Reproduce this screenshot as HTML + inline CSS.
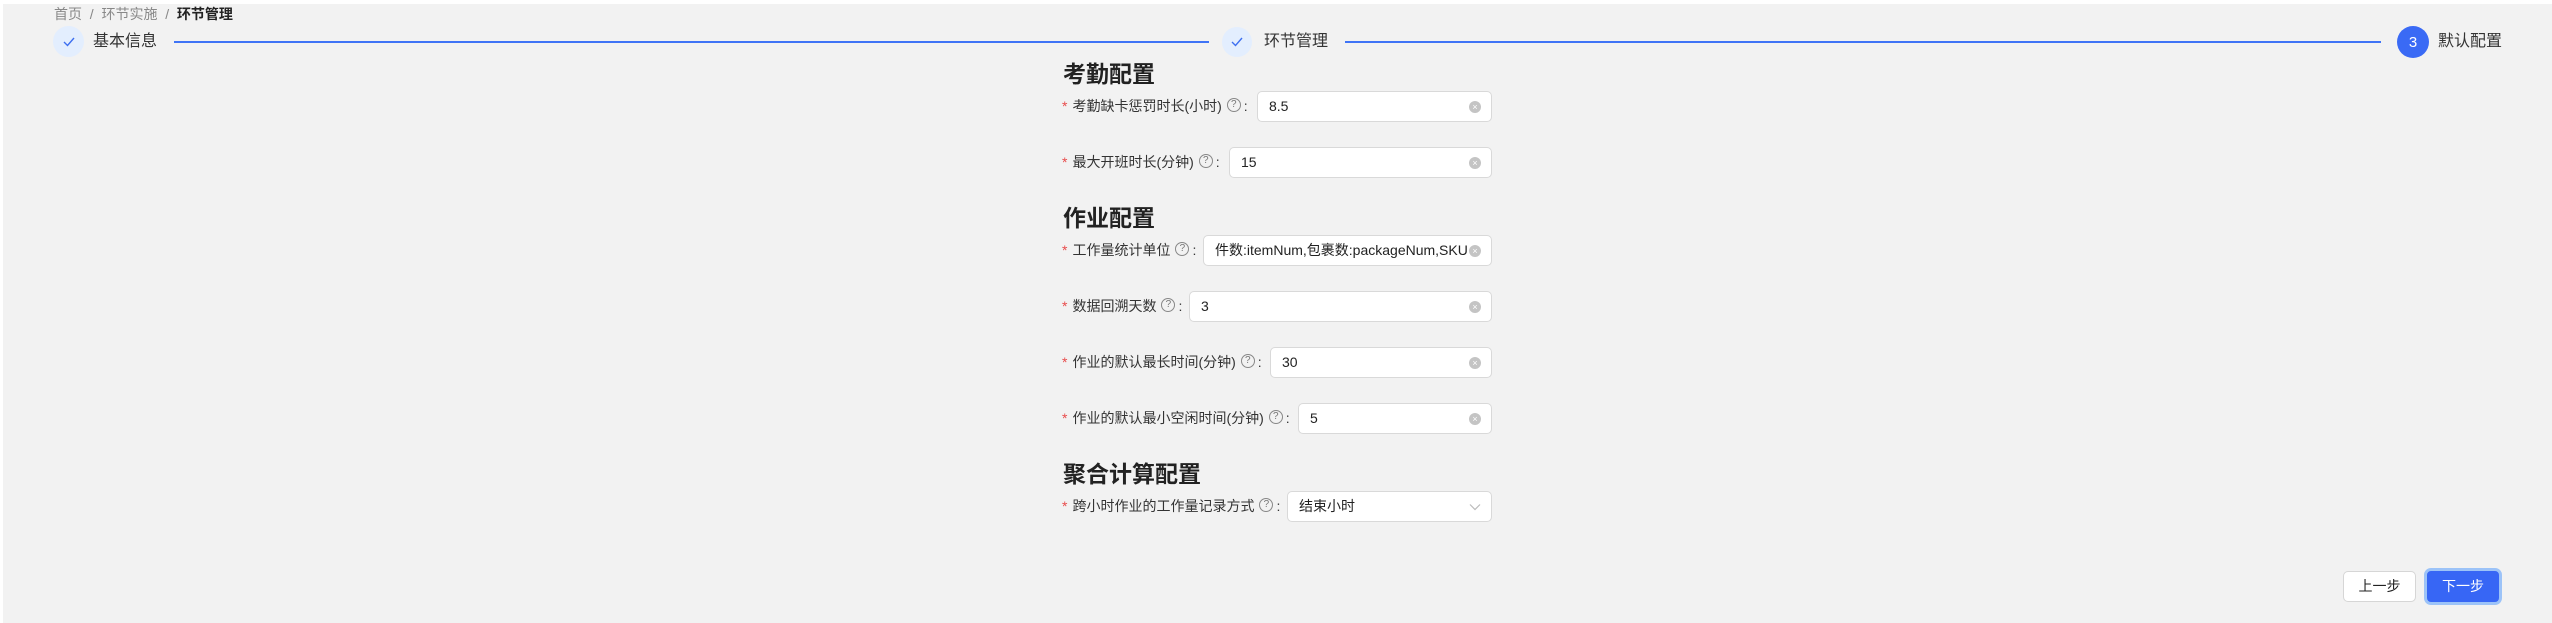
<!DOCTYPE html>
<html><head><meta charset="utf-8"><style>
*{box-sizing:border-box;margin:0;padding:0}
body{width:2552px;height:623px;background:#fff;font-family:"Liberation Sans","Noto Sans CJK SC",sans-serif;color:#222;position:relative;overflow:hidden}
.bg{position:absolute;left:3px;top:4px;right:0;bottom:0;background:#f2f2f2}
.a{position:absolute}
.bc{left:54px;top:5px;font-size:14px;color:#888;line-height:18px}
.bc b{color:#222}
.circ{width:30px;height:30px;border-radius:50%;background:#e3eefe;top:27px;display:flex;align-items:center;justify-content:center}
.st{font-size:16px;top:32px;line-height:20px;color:#333}
.line{height:2px;background:#3f74f6;top:41px}
.h{font-size:23px;font-weight:bold;left:1063px;line-height:28px;color:#222}
.lb{left:1062px;font-size:14px;line-height:20px;color:#333;white-space:nowrap}
.lb i{font-style:normal;color:#e84b4b;margin-right:5px}
.q{display:inline-block;width:14px;height:14px;border:1px solid #888;border-radius:50%;font-size:10px;line-height:12px;text-align:center;color:#777;vertical-align:middle;position:relative;top:-2px;margin:0 3px 0 5px}
.in{height:31px;background:#fff;border:1px solid #d9d9d9;border-radius:5px;right:1060px;font-size:14px;line-height:29px;padding-left:11px;color:#222;overflow:hidden;white-space:nowrap}
.x{position:absolute;right:10px;top:9px;width:12px;height:12px;border-radius:50%;background:#c4c4c4;color:#fff;font-size:9px;line-height:12px;text-align:center}
.btn{font-size:14px;border-radius:5px;text-align:center}
</style></head><body>
<div class="bg"></div>
<div class="a bc">首页 &nbsp;/&nbsp; 环节实施 &nbsp;/&nbsp; <b>环节管理</b></div>
<div class="a circ" style="left:53px;top:26px;width:31px;height:31px"><svg width="14" height="12" viewBox="0 0 14 12"><path d="M2 6l3.5 3.5L12 2" fill="none" stroke="#3d6ff0" stroke-width="1.4"/></svg></div>
<div class="a st" style="left:93px">基本信息</div>
<div class="a line" style="left:174px;width:1035px"></div>
<div class="a circ" style="left:1222px"><svg width="14" height="12" viewBox="0 0 14 12"><path d="M2 6l3.5 3.5L12 2" fill="none" stroke="#3d6ff0" stroke-width="1.4"/></svg></div>
<div class="a st" style="left:1264px">环节管理</div>
<div class="a line" style="left:1345px;width:1036px"></div>
<div class="a circ" style="left:2397px;top:26px;width:32px;height:32px;background:#3a6af5;color:#fff;font-size:15px">3</div>
<div class="a st" style="left:2438px">默认配置</div>

<div class="a h" style="top:60px">考勤配置</div>
<div class="a lb" style="top:96px"><i>*</i>考勤缺卡惩罚时长(小时)<span class="q">?</span>:</div>
<div class="a in" style="left:1257px;top:91px;width:235px">8.5<span class="x">×</span></div>
<div class="a lb" style="top:152px"><i>*</i>最大开班时长(分钟)<span class="q">?</span>:</div>
<div class="a in" style="left:1229px;top:147px;width:263px">15<span class="x">×</span></div>

<div class="a h" style="top:204px">作业配置</div>
<div class="a lb" style="top:240px"><i>*</i>工作量统计单位<span class="q">?</span>:</div>
<div class="a in" style="left:1203px;top:235px;width:289px;padding-right:30px">件数:itemNum,包裹数:packageNum,SKU<span class="x">×</span></div>
<div class="a lb" style="top:296px"><i>*</i>数据回溯天数<span class="q">?</span>:</div>
<div class="a in" style="left:1189px;top:291px;width:303px">3<span class="x">×</span></div>
<div class="a lb" style="top:352px"><i>*</i>作业的默认最长时间(分钟)<span class="q">?</span>:</div>
<div class="a in" style="left:1270px;top:347px;width:222px">30<span class="x">×</span></div>
<div class="a lb" style="top:408px"><i>*</i>作业的默认最小空闲时间(分钟)<span class="q">?</span>:</div>
<div class="a in" style="left:1298px;top:403px;width:194px">5<span class="x">×</span></div>

<div class="a h" style="top:460px">聚合计算配置</div>
<div class="a lb" style="top:496px"><i>*</i>跨小时作业的工作量记录方式<span class="q">?</span>:</div>
<div class="a in" style="left:1287px;top:491px;width:205px">结束小时<svg style="position:absolute;right:10px;top:11px" width="12" height="8" viewBox="0 0 12 8"><path d="M1 1.5l5 5 5-5" fill="none" stroke="#bbb" stroke-width="1.2"/></svg></div>

<div class="a btn" style="left:2343px;top:571px;width:73px;height:31px;background:#fff;border:1px solid #d6d6d6;line-height:29px;color:#222">上一步</div>
<div class="a btn" style="left:2424px;top:568px;width:78px;height:37px;border:3px solid #9cc3f8;border-radius:7px;background:#3766f5;color:#fff;line-height:31px">下一步</div>
</body></html>
